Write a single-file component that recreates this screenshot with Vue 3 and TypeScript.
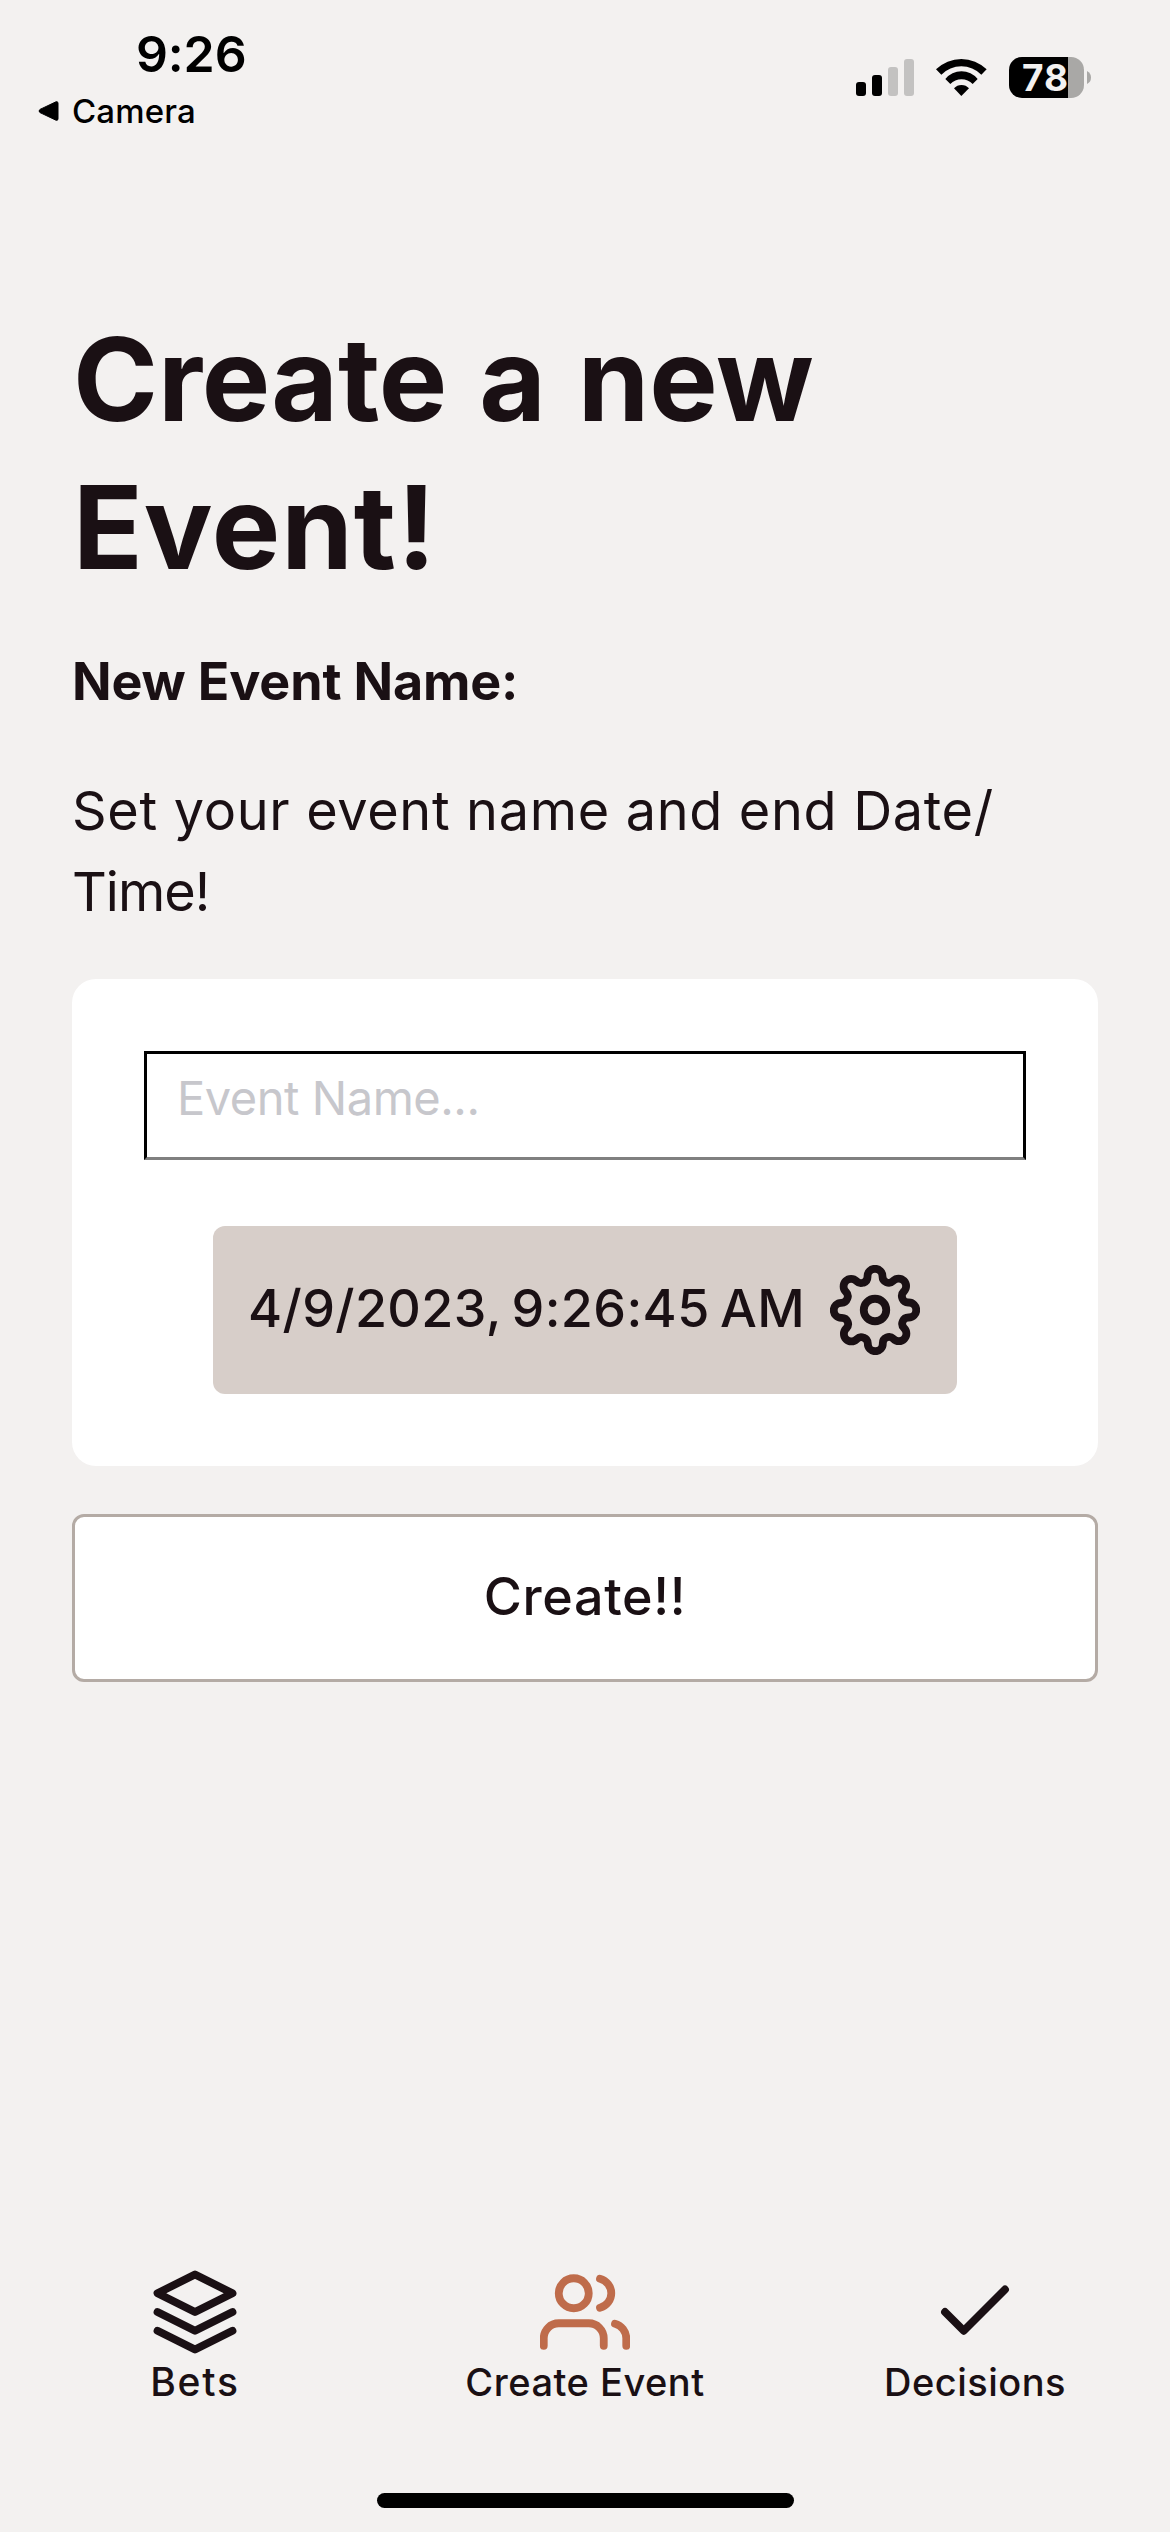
<script setup lang="ts">
import { ref } from 'vue'

type TabIcon = 'layers' | 'users' | 'check'

interface Tab {
  id: string
  label: string
  icon: TabIcon
}

const tabs: Tab[] = [
  { id: 'bets', label: 'Bets', icon: 'layers' },
  { id: 'event', label: 'Create Event', icon: 'users' },
  { id: 'decisions', label: 'Decisions', icon: 'check' },
]

const activeTab = ref('event')
const eventName = ref('')
const endDate = ref('4/9/2023, 9:26:45 AM')
</script>

<template>
  <div class="screen">
    <header class="status">
      <div class="status-left">
        <div class="clock">9:26</div>
        <div class="back">
          <svg width="23" height="22" viewBox="0 0 23 22">
            <path
              d="M3 9.4 L19 1.8 Q21 1.2 21 3.2 V18.8 Q21 20.8 19 20.2 L3 12.6 Q1 11 3 9.4 Z"
              stroke="#000"
              stroke-linejoin="round"
            />
          </svg>
          <span>Camera</span>
        </div>
      </div>
      <div class="status-right">
        <svg width="58" height="37" viewBox="0 0 58 37">
          <rect x="0" y="23" width="10" height="14" rx="3" />
          <rect x="16" y="16" width="10" height="21" rx="3" />
          <rect x="32" y="8" width="10" height="29" rx="3" fill="#c3c2c1" />
          <rect x="48" y="0" width="10" height="37" rx="3" fill="#c3c2c1" />
        </svg>
        <svg width="51" height="37" viewBox="348 87 153 111">
          <path d="M348 118 A108.7 108.7 0 0 1 500 118 L484 134 A84.5 84.5 0 0 0 364 134 Z" />
          <path d="M376 147 A62 62 0 0 1 473 147 L458 162 A46 46 0 0 0 391 162 Z" />
          <path d="M402 175 A30 30 0 0 1 447 175 L424 198 Z" />
        </svg>
        <div class="battery">
          <div class="battery-body">78</div>
          <svg width="4" height="13" viewBox="0 0 4 13">
            <path d="M0 0 Q4 2 4 6.500 Q4 11 0 13 Z" fill="#a9a8a6" />
          </svg>
        </div>
      </div>
    </header>

    <main class="content">
      <h1>
        <span class="line-one">Create a new</span>
        <span class="line-two">Event!</span>
      </h1>
      <h2>New Event Name:</h2>
      <p class="intro">
        <span class="intro-first">Set your event name and end Date/</span>
        <span class="intro-second">Time!</span>
      </p>

      <section class="card">
        <input v-model="eventName" class="name" type="text" placeholder="Event Name..." />
        <button class="date" type="button">
          <span>{{ endDate }}</span>
          <svg class="icon" viewBox="0 0 24 24">
            <circle cx="12" cy="12" r="3" />
            <path
              d="M19.4 15a1.65 1.65 0 0 0 .33 1.82l.06.06a2 2 0 0 1 0 2.83 2 2 0 0 1-2.83 0l-.06-.06a1.65 1.65 0 0 0-1.82-.33 1.65 1.65 0 0 0-1 1.51V21a2 2 0 0 1-2 2 2 2 0 0 1-2-2v-.09A1.65 1.65 0 0 0 9 19.4a1.65 1.65 0 0 0-1.82.33l-.06.06a2 2 0 0 1-2.83 0 2 2 0 0 1 0-2.83l.06-.06a1.65 1.65 0 0 0 .33-1.82 1.65 1.65 0 0 0-1.51-1H3a2 2 0 0 1-2-2 2 2 0 0 1 2-2h.09A1.65 1.65 0 0 0 4.6 9a1.65 1.65 0 0 0-.33-1.82l-.06-.06a2 2 0 0 1 0-2.83 2 2 0 0 1 2.83 0l.06.06a1.65 1.65 0 0 0 1.82.33H9a1.65 1.65 0 0 0 1-1.51V3a2 2 0 0 1 2-2 2 2 0 0 1 2 2v.09a1.65 1.65 0 0 0 1 1.51 1.65 1.65 0 0 0 1.82-.33l.06-.06a2 2 0 0 1 2.83 0 2 2 0 0 1 0 2.83l-.06.06a1.65 1.65 0 0 0-.33 1.82V9a1.65 1.65 0 0 0 1.51 1H21a2 2 0 0 1 2 2 2 2 0 0 1-2 2h-.09a1.65 1.65 0 0 0-1.51 1z"
            />
          </svg>
        </button>
      </section>

      <button class="submit" type="button">Create!!</button>
    </main>

    <nav class="tabs">
      <a
        v-for="tab in tabs"
        :key="tab.id"
        class="tab"
        :class="[`tab-${tab.id}`, { active: tab.id === activeTab }]"
        @click="activeTab = tab.id"
      >
        <svg class="icon" viewBox="0 0 24 24">
          <template v-if="tab.icon === 'layers'">
            <polygon points="12 2 2 7 12 12 22 7 12 2" />
            <polyline points="2 17 12 22 22 17" />
            <polyline points="2 12 12 17 22 12" />
          </template>
          <template v-else-if="tab.icon === 'users'">
            <path d="M17 21v-2a4 4 0 0 0-4-4H5a4 4 0 0 0-4 4v2" />
            <circle cx="9" cy="7" r="4" />
            <path d="M23 21v-2a4 4 0 0 0-3-3.870" />
            <path d="M16 3.130a4 4 0 0 1 0 7.750" />
          </template>
          <polyline v-else points="20 6 9 17 4 12" />
        </svg>
        <span class="label">{{ tab.label }}</span>
      </a>
    </nav>
    <div class="home-bar"></div>
  </div>
</template>

<style>
body {
  background: #f3f1f0;
}
</style>

<style scoped>
.screen {
  width: 1170px;
  height: 2532px;
  box-sizing: border-box;
  display: flex;
  flex-direction: column;
  background: #f3f1f0;
  color: #1a1014;
  font-family: Inter, 'Liberation Sans', sans-serif;
  overflow: hidden;
}

.screen svg {
  display: block;
  flex: none;
}

.status {
  display: flex;
  justify-content: space-between;
  align-items: flex-start;
  height: 306px;
  box-sizing: border-box;
  padding: 24px 79px 0 37px;
  color: #000;
}

.clock {
  padding-left: 99px;
  font-size: 50px;
  font-weight: 600;
  line-height: 60px;
  letter-spacing: -0.15px;
}

.back {
  display: flex;
  align-items: center;
  gap: 12px;
  margin-top: 7px;
  font-size: 33px;
  font-weight: 500;
  line-height: 40px;
  letter-spacing: 0.15px;
}

.status-right {
  display: flex;
  align-items: center;
  gap: 22px;
  margin-top: 33px;
}

.battery {
  display: flex;
  align-items: center;
  gap: 3px;
}

.battery-body {
  width: 75px;
  height: 41px;
  box-sizing: border-box;
  padding-left: 13px;
  border-radius: 13px;
  background: linear-gradient(to right, #000 59px, #a9a8a6 59px);
  color: #f3f1f0;
  font-size: 37px;
  font-weight: 700;
  line-height: 41px;
  letter-spacing: 1px;
}

.content {
  display: flex;
  flex-direction: column;
  padding: 0 72px;
}

h1,
h2,
p {
  margin: 0;
}

h1 {
  display: flex;
  flex-direction: column;
  padding-left: 1px;
  font-size: 115px;
  font-weight: 700;
  line-height: 148px;
  white-space: nowrap;
}

.line-one {
  letter-spacing: -0.15px;
  word-spacing: 5px;
}

.line-two {
  letter-spacing: 1px;
}

h2 {
  margin-top: 39px;
  font-size: 52px;
  font-weight: 700;
  line-height: 81px;
  letter-spacing: -0.15px;
}

.intro {
  display: flex;
  flex-direction: column;
  margin-top: 48px;
  font-size: 54px;
  line-height: 81px;
  white-space: nowrap;
}

.intro-first {
  letter-spacing: 0.67px;
}

.intro-second {
  letter-spacing: -1px;
}

.card {
  display: flex;
  flex-direction: column;
  align-items: center;
  gap: 66px;
  margin-top: 47px;
  padding: 72px;
  border-radius: 24px;
  background: #fff;
}

.name {
  width: 100%;
  height: 109px;
  box-sizing: border-box;
  padding: 0 30px 17px;
  border: 3px solid #000;
  border-bottom-color: #808080;
  border-radius: 0;
  outline: none;
  background: #fff;
  color: #1a1014;
  font: 400 47px Inter, 'Liberation Sans', sans-serif;
  letter-spacing: -0.46px;
}

.name::placeholder {
  color: #c7c7cc;
  opacity: 1;
}

.date {
  display: flex;
  align-items: center;
  justify-content: space-between;
  width: 744px;
  height: 168px;
  box-sizing: border-box;
  padding: 0 37px 0 35px;
  border: 0;
  border-radius: 12px;
  background: #d7cec9;
  color: inherit;
  font: 500 52px Inter, 'Liberation Sans', sans-serif;
  letter-spacing: 0.4px;
  word-spacing: -4px;
  white-space: nowrap;
}

.date span {
  padding-bottom: 3px;
}

.icon {
  width: 90px;
  height: 90px;
  fill: none;
  stroke: currentColor;
  stroke-width: 2.08;
  stroke-linecap: round;
  stroke-linejoin: round;
}

.submit {
  height: 168px;
  margin-top: 48px;
  padding: 0 0 4px;
  border: 3px solid #b4aba5;
  border-radius: 12px;
  background: #fff;
  color: inherit;
  font: 500 52px Inter, 'Liberation Sans', sans-serif;
  letter-spacing: 0.65px;
}

.tabs {
  display: flex;
  margin-top: auto;
  height: 226px;
}

.tab {
  flex: 1 1 0;
  display: flex;
  flex-direction: column;
  align-items: center;
  cursor: pointer;
}

.tab.active .icon {
  color: #bf6c4b;
}

.label {
  margin-top: 1px;
  font-size: 38px;
  font-weight: 500;
  line-height: 48px;
  letter-spacing: 0.5px;
}

.tab-bets .label {
  font-size: 39px;
  letter-spacing: 1.8px;
}

.home-bar {
  width: 417px;
  height: 15px;
  margin: 0 auto 24px;
  border-radius: 8px;
  background: #000;
}
</style>
